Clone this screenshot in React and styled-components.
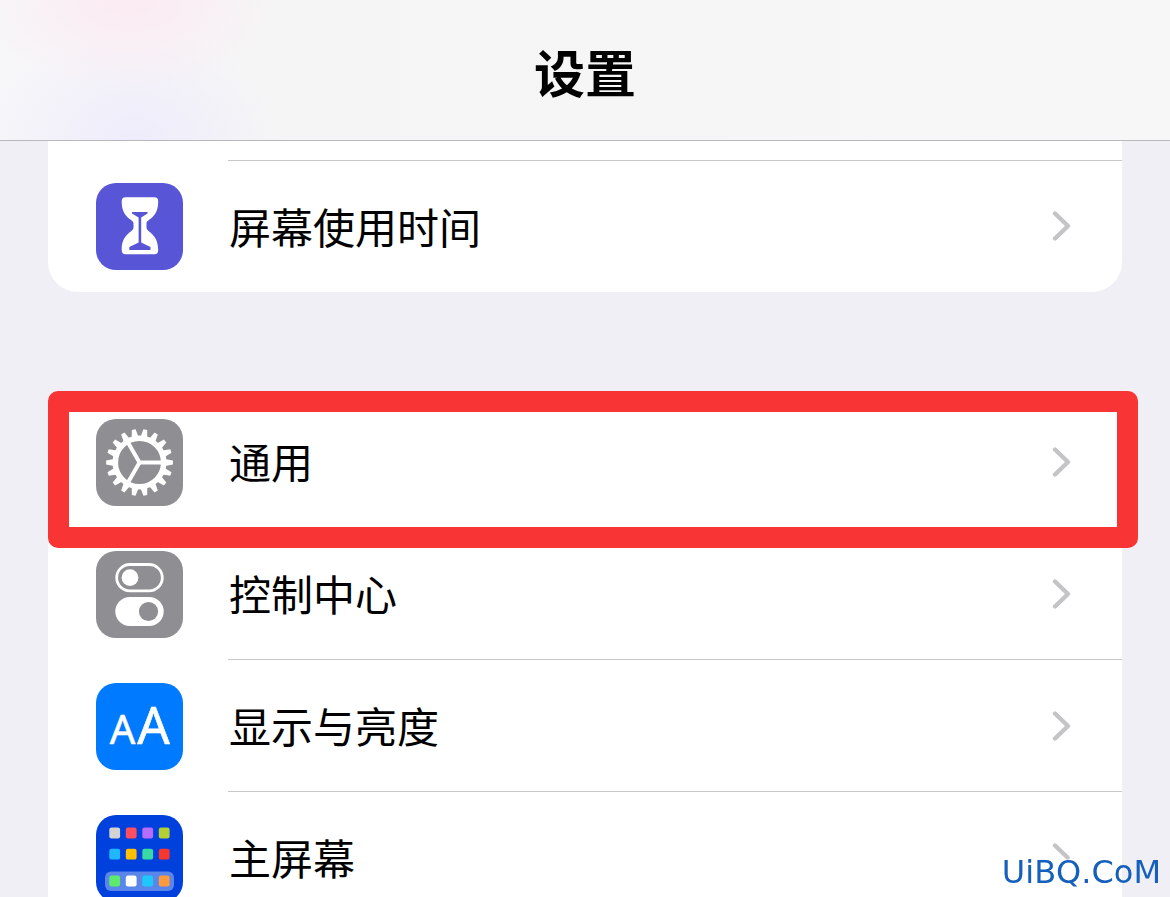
import React from 'react';
import styled, { createGlobalStyle } from 'styled-components';

const GlobalStyle = createGlobalStyle`
    * {
        box-sizing: border-box;
    }

    body {
        margin: 0;
        background: #f0eff5;
        color: #000;
        font-family: "Noto Sans CJK SC", sans-serif;
    }
`;

const Page = styled.div`
    display: flex;
    flex-direction: column;
    height: 100vh;
    overflow: hidden;
`;

const Header = styled.header`
    display: flex;
    flex: none;
    align-items: center;
    justify-content: center;
    height: 141px;
    padding-top: 2px;
    border-bottom: 1px solid #b9b8bd;
    background:
        radial-gradient(ellipse 150px 90px at 130px 0, #fbeaf2 0%, #fbeaf200 100%),
        radial-gradient(ellipse 150px 110px at 135px 140px, #eeecfb 0%, #eeecfb00 100%),
        linear-gradient(to right, #f7f6f9 0, #f5f5f5 300px, #f7f7f7 100%);
`;

const Title = styled.h1`
    margin: 0;
    font-size: 51px;
    line-height: 60px;
    font-weight: 700;
`;

const Content = styled.main`
    display: flex;
    flex-direction: column;
    gap: 104px;
    padding: 0 48px;
`;

const Group = styled.ul`
    flex: none;
    margin: 0;
    padding: 0;
    list-style: none;
    background: #fff;
    border-radius: ${props => props.$continued ? '0 0 30px 30px' : '30px 30px 0 0'};
`;

const RowTail = styled.li`
    height: 20px;
    margin-bottom: -1px;
    margin-left: 180px;
    border-bottom: 1px solid #c8c8ca;
`;

const Row = styled.li`
    position: relative;
`;

const RowLink = styled.a`
    display: flex;
    align-items: center;
    gap: 45px;
    height: 132px;
    padding-left: 48px;
    color: inherit;
    text-decoration: none;
`;

const RowBody = styled.span`
    display: flex;
    flex: 1;
    align-items: center;
    justify-content: space-between;
    height: 132px;
    padding-right: 50px;
    border-bottom: ${props => props.$divider ? '1px solid #c8c8ca' : 'none'};
`;

const Label = styled.span`
    padding-left: 1px;
    font-size: 42px;
    line-height: 60px;
    padding-bottom: 1px;
`;

const Tile = styled.svg`
    flex: none;
    width: 87px;
    height: 87px;
    border-radius: 20px;
    background: ${props => props.$color};
`;

const Highlight = styled.div`
    position: absolute;
    top: -5px;
    right: -16px;
    bottom: -20px;
    left: 0;
    z-index: 1;
    border: 21px solid #f83434;
    border-radius: 10px;
    pointer-events: none;
`;

const Watermark = styled.div`
    position: fixed;
    right: 9px;
    bottom: 5px;
    color: #1560bd;
    font-family: "DejaVu Sans", sans-serif;
    font-size: 32px;
    line-height: 40px;
`;

const ScreenTimeIcon = () => (
    <Tile $color="#5856d6" viewBox="0 0 87 87" aria-hidden="true">
        <path
            fill="#fff"
            d="M29.5 14.3H58.5Q62.2 14.3 62.2 18.5C62.2 36 50.5 35.5 50.5 40.5V44.5C50.5 49.5 62.2 50 62.2 67Q62.2 71.2 58.5 71.2H29.5Q25.7 71.2 25.7 67C25.7 50 37.5 49.5 37.5 44.5V40.5C37.5 35.5 25.7 36 25.7 18.5Q25.7 14.3 29.5 14.3Z"
        />
        <path fill="#5856d6" d="M36 29H51.5V30.5L45.2 34.5V59.5L54.5 64V67H33.3V64L42.6 59.5V34.5L36 30.5Z" />
    </Tile>
);

const TEETH = 18;

const GeneralIcon = () => (
    <Tile $color="#8e8e93" viewBox="0 0 87 87" aria-hidden="true">
        <g transform="translate(43.5 43.5)">
            <circle r="24.2" fill="none" stroke="#fff" strokeWidth="5.6" />
            {Array.from({ length: TEETH }, (_, idx) => (
                <path key={idx} fill="#fff" d="M25.5 -3.4L33.4 -1.9V1.9L25.5 3.4Z" transform={`rotate(${(idx * 360) / TEETH})`} />
            ))}
            {[0, 120, 240].map(angle => (
                <path key={angle} stroke="#fff" strokeWidth="4" d="M0 0H23" transform={`rotate(${angle})`} />
            ))}
        </g>
    </Tile>
);

const ControlCenterIcon = () => (
    <Tile $color="#8e8e93" viewBox="0 0 87 87" aria-hidden="true">
        <rect x="20.7" y="13.5" width="45.6" height="26.4" rx="13.2" fill="none" stroke="#fff" strokeWidth="2.8" />
        <circle cx="34" cy="26.6" r="8.4" fill="#fff" />
        <rect x="19.3" y="46" width="48.4" height="29" rx="14.5" fill="#fff" />
        <circle cx="52.5" cy="60.5" r="9.6" fill="#8e8e93" />
    </Tile>
);

const DisplayIcon = () => (
    <Tile $color="#007aff" viewBox="0 0 87 87" aria-hidden="true">
        <g fill="#fff" stroke="#fff" strokeWidth="0.6" strokeLinejoin="round" fontFamily="Noto Sans, sans-serif" textAnchor="middle">
            <text x="26.5" y="61" fontSize="40">A</text>
            <text x="57.5" y="61" fontSize="51">A</text>
        </g>
    </Tile>
);

const homeTiles = [
    ['#d4d3d2', '#ff4f5e', '#b66dff', '#b3cf34'],
    ['#1fb8ff', '#ffc000', '#37d9a4', '#fa372f'],
    ['#5eeb6b', '#ffffff', '#1fc8fb', '#ff9a3e']
];
const tileX = [13.3, 29.8, 46.3, 62.8];
const tileY = [12.6, 33.8, 60.6];

const HomeScreenIcon = () => (
    <Tile $color="#0040dd" viewBox="0 0 87 87" aria-hidden="true">
        <rect x="9" y="56.4" width="69" height="19.5" rx="6" fill="#5a86ea" />
        {homeTiles.map((colors, row) => colors.map((color, col) => (
            <rect key={`${row}-${col}`} x={tileX[col]} y={tileY[row]} width="10.8" height="10.8" rx="2.2" fill={color} />
        )))}
    </Tile>
);

const Chevron = ({ half }) => (
    <svg width="20" height="32" viewBox="0 0 20 32" fill="none" stroke="#c4c4c6" strokeWidth="4.4" strokeLinecap="round" strokeLinejoin="round" aria-hidden="true">
        <path d={half ? 'M3 3.5L15.5 15.5' : 'M3 3.5L16 16L3 28.5'} />
    </svg>
);

const generalRows = [
    { label: '通用', Icon: GeneralIcon, highlighted: true },
    { label: '控制中心', Icon: ControlCenterIcon },
    { label: '显示与亮度', Icon: DisplayIcon },
    { label: '主屏幕', Icon: HomeScreenIcon, half: true }
];

const SettingsRow = ({ label, Icon, highlighted, half, divider }) => (
    <Row>
        <RowLink href="#">
            <Icon />
            <RowBody $divider={divider}>
                <Label>{label}</Label>
                <Chevron half={half} />
            </RowBody>
        </RowLink>
        {highlighted && <Highlight />}
    </Row>
);

const App = () => (
    <>
        <GlobalStyle />
        <Page>
            <Header>
                <Title>设置</Title>
            </Header>
            <Content>
                <Group $continued>
                    <RowTail aria-hidden="true" />
                    <SettingsRow label="屏幕使用时间" Icon={ScreenTimeIcon} />
                </Group>
                <Group>
                    {generalRows.map(row => (
                        <SettingsRow key={row.label} {...row} divider />
                    ))}
                </Group>
            </Content>
            <Watermark>UiBQ.CoM</Watermark>
        </Page>
    </>
);

export default App;
